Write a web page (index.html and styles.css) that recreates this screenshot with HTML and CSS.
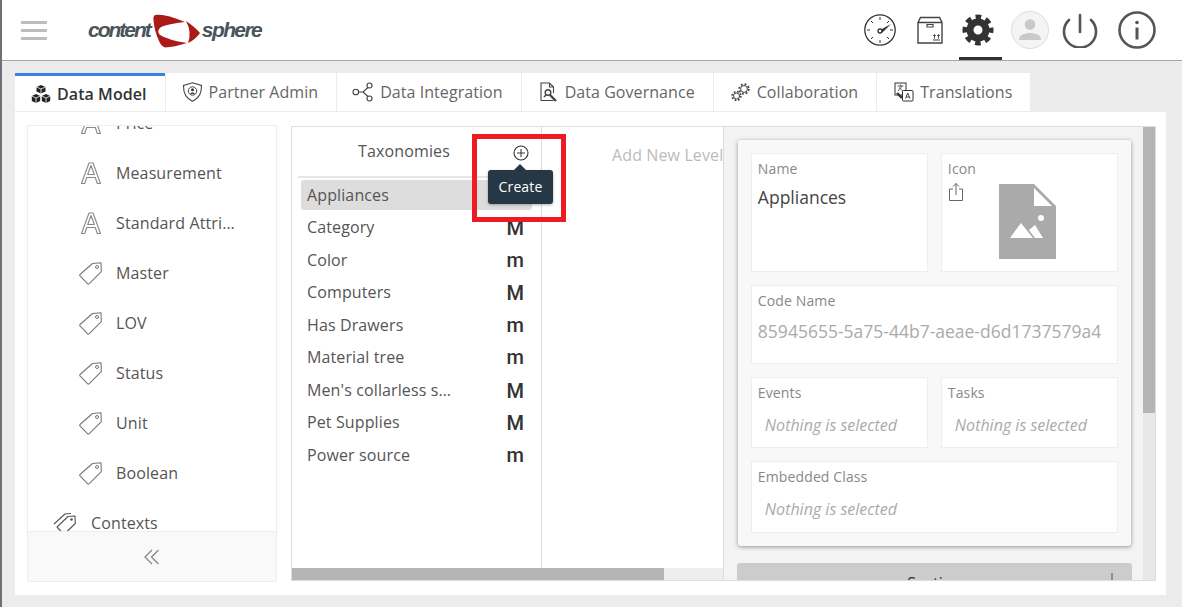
FILE: index.html
```html
<!DOCTYPE html>
<html lang="en">
<head>
    <meta charset="UTF-8">
    <title>Content Sphere - Data Model</title>
    <link rel="stylesheet" href="styles.css">
</head>
<body>
<svg class="defs">
    <defs>
        <symbol id="ic-a" viewBox="0 0 24 24">
            <path d="M2.5 22.5 10 2h4l7.5 20.5h-3.2l-2-6H7.700l-2 6zM8.700 13.500h6.600L12 4.500z" fill="none" stroke="#888" stroke-width="1.100" stroke-linejoin="round"/>
        </symbol>
        <symbol id="ic-tag" viewBox="0 0 24 24">
            <path d="M1 13.500 13.500 2.500l8.500-.8.300 9L10 22.800a1 1 0 0 1-1.300 0L1 14.800a1 1 0 0 1 0-1.300z" fill="none" stroke="#777" stroke-width="1.100" stroke-linejoin="round"/>
            <circle cx="18" cy="6" r="1.500" fill="none" stroke="#777"/>
        </symbol>
    </defs>
</svg>

<header class="topbar">
    <button class="burger"><span></span><span></span><span></span></button>
    <div class="logo">
        <span>content</span>
        <svg width="48" height="35" viewBox="155 13 48 35">
            <path d="M157 15Q166 13 187 22 170 24 163 27 158 31 162 35 170 40 189 43 176 47 167 47.500 163 46 161 41 156 30 155.500 20 155 16 157 15z" fill="#ab1a16"/>
            <path d="M188 21Q197 27 202 33 197 40 190 43 194 32 188 21z" fill="#ab1a16"/>
        </svg>
        <span class="logo-end">sphere</span>
    </div>
    <nav class="top-icons">
        <a class="top-btn">
            <svg width="34" height="34" viewBox="0 0 34 34" fill="none" stroke="#333">
                <circle cx="17" cy="17" r="15.200" stroke-width="1.300"/>
                <path d="M17 4v3M17 27v3M4 17h3M27 17h3M8 8l2 2M26 8l-2 2M8 26l2-2M26 26l-2-2" stroke-width="1"/>
                <circle cx="17" cy="18" r="2" stroke-width="1.300"/>
                <path d="M18 16.500 28 11l-8.500 8.500z" fill="#333" stroke="none"/>
            </svg>
        </a>
        <a class="top-btn">
            <svg width="28" height="28" viewBox="0 0 28 28" fill="none" stroke="#444" stroke-width="1.400">
                <path d="M2 6.500 4.500 1.500h19L26 6.500V27H2zM2 6.500h24"/>
                <path d="M11 8.500h6v2.500h-6z" stroke-width="1.200"/>
                <path d="M17 24h7M18.500 22.500v-4M22.500 22.500v-4M17.300 20l1.200-1.500 1.200 1.500M21.300 20l1.200-1.500 1.200 1.500" stroke-width="1"/>
            </svg>
        </a>
        <a class="top-btn is-current">
            <svg width="34" height="34" viewBox="0 0 34 34" fill="none" stroke="#333">
                <circle cx="17" cy="17" r="13" stroke-width="5" stroke-dasharray="5.600 4.610" stroke-dashoffset="2.800"/>
                <circle cx="17" cy="17" r="8" stroke-width="7"/>
            </svg>
        </a>
        <a class="top-btn">
            <span class="avatar">
                <svg width="24" height="24" viewBox="0 0 24 24" fill="#c9c9c9">
                    <circle cx="12" cy="7.500" r="5.300"/>
                    <path d="M1 23c0-5 5-7 11-7s11 2 11 7z"/>
                </svg>
            </span>
        </a>
        <a class="top-btn">
            <svg width="36" height="36" viewBox="0 0 36 36" fill="none" stroke="#555" stroke-width="2.600" stroke-linecap="round">
                <path d="M7 8a16 16 0 1 0 22 0"/>
                <path d="M18 3v17"/>
            </svg>
        </a>
        <a class="top-btn is-last">
            <svg width="38" height="38" viewBox="0 0 38 38" fill="none" stroke="#555">
                <circle cx="19" cy="19" r="17.500" stroke-width="2.600"/>
                <path d="M19 16.500v12" stroke-width="3"/>
                <circle cx="19" cy="11.500" r="1.800" fill="#555" stroke="none"/>
            </svg>
        </a>
    </nav>
</header>

<div class="tabs">
    <a class="tab is-active">
        <svg width="20" height="20" viewBox="0 0 20 20" fill="#222">
            <path d="M10 1 14.500 3v4.500L10 9.500 5.500 7.500V3z"/>
            <path d="M5 10l4.200 2v5L5 19 .800 17v-5z"/>
            <path d="M15 10l4.200 2v5L15 19l-4.200-2v-5z"/>
            <path d="M5.500 3 10 5l4.500-2M10 5v4.500M.800 12 5 14l4.200-2M5 14v5M10.800 12l4.200 2 4.200-2M15 14v5" fill="none" stroke="#fff" stroke-width=".8"/>
        </svg>
        Data Model
    </a>
    <a class="tab">
        <svg width="20" height="20" viewBox="0 0 20 20" fill="none" stroke="#444">
            <path d="M9.500.800 18.500 3.500c0 7-1.500 12-9 15.800C2 15.500.500 10.500.500 3.500z" stroke-width="1.100"/>
            <circle cx="9.500" cy="9" r="4.200" stroke-width="1"/>
            <circle cx="9.500" cy="7.800" r="1.500" fill="#333" stroke="none"/>
            <path d="M7.300 12c0-2 4.400-2 4.400 0z" fill="#333" stroke="none"/>
        </svg>
        Partner Admin
    </a>
    <a class="tab">
        <svg width="20" height="20" viewBox="0 0 20 20" fill="none" stroke="#444" stroke-width="1.100">
            <circle cx="1.800" cy="10" r="2.800"/>
            <circle cx="15.500" cy="3.500" r="2.500"/>
            <circle cx="15.500" cy="16.500" r="2.500"/>
            <path d="M4.600 10H9l5-4.500M9 10l5 4.500"/>
        </svg>
        Data Integration
    </a>
    <a class="tab">
        <svg width="20" height="20" viewBox="0 0 20 20" fill="none" stroke="#444" stroke-width="1.100">
            <path d="M14.500 18.500H2V1h8.500l4 4v6M10.500 1v4h4"/>
            <circle cx="9" cy="10.500" r="2.800" stroke-width="1.400"/>
            <path d="M11 13l6 6" stroke-width="2.400"/>
            <path d="M5 15l2-2" stroke-width="1.600"/>
        </svg>
        Data Governance
    </a>
    <a class="tab">
        <svg width="20" height="20" viewBox="0 0 20 20" fill="none" stroke="#444">
            <circle cx="13" cy="7" r="4.800" stroke-width="1.800" stroke-dasharray="1.900 1.870"/>
            <circle cx="13" cy="7" r="3.400" stroke-width="1"/>
            <circle cx="5.500" cy="14" r="4.300" stroke-width="1.800" stroke-dasharray="1.700 1.680"/>
            <circle cx="5.500" cy="14" r="3" stroke-width="1"/>
        </svg>
        Collaboration
    </a>
    <a class="tab">
        <svg width="20" height="20" viewBox="0 0 20 20" fill="none" stroke="#333">
            <rect x="1" y="1" width="11" height="12" fill="#fff"/>
            <path d="M3.500 4h6M6.500 2.500V4M4 9l4-5M5 5.500 9 9" stroke-width=".8"/>
            <rect x="8.500" y="8.500" width="10.500" height="10.500" rx="1" fill="#fff"/>
            <path d="M11.500 16.500 13.700 11l2.300 5.500M12.300 15h3" stroke-width=".9"/>
            <path d="M3 11l5 5" stroke-width="2.400"/>
        </svg>
        Translations
    </a>
</div>

<main class="content">
    <aside class="sidebar">
        <ul class="side-list">
            <li class="side-item"><svg class="side-icon"><use href="#ic-a"/></svg>Price</li>
            <li class="side-item"><svg class="side-icon"><use href="#ic-a"/></svg>Measurement</li>
            <li class="side-item"><svg class="side-icon"><use href="#ic-a"/></svg><span class="side-name">Standard Attributes</span></li>
            <li class="side-item"><svg class="side-icon"><use href="#ic-tag"/></svg>Master</li>
            <li class="side-item"><svg class="side-icon"><use href="#ic-tag"/></svg>LOV</li>
            <li class="side-item"><svg class="side-icon"><use href="#ic-tag"/></svg>Status</li>
            <li class="side-item"><svg class="side-icon"><use href="#ic-tag"/></svg>Unit</li>
            <li class="side-item"><svg class="side-icon"><use href="#ic-tag"/></svg>Boolean</li>
            <li class="side-item is-parent">
                <svg class="side-icon" viewBox="0 0 24 24" fill="none" stroke="#555" stroke-width="1.100">
                    <path d="M1 13 12 3l6-.5M4 16 15 5.500l7-.5.300 7.500L11 23.500z" stroke-linejoin="round"/>
                    <circle cx="18.500" cy="8.500" r="1.300" fill="#555" stroke="none"/>
                </svg>
                Contexts
            </li>
        </ul>
        <div class="side-foot">
            <svg width="16" height="16" viewBox="0 0 16 16" fill="none" stroke="#888" stroke-width="1.300">
                <path d="M8 1 1 8l7 7M14.500 1l-7 7 7 7"/>
            </svg>
        </div>
    </aside>

    <section class="workspace">
        <div class="columns">
            <div class="col-tax">
                <div class="tax-head">
                    <span>Taxonomies</span>
                    <svg class="tax-add" width="16" height="16" viewBox="0 0 16 16" fill="none" stroke="#333">
                        <circle cx="8" cy="8" r="7" stroke-width="1.100"/>
                        <path d="M8 4v8M4 8h8" stroke-width="1"/>
                    </svg>
                    <div class="tooltip">Create</div>
                </div>
                <ul class="tax-list">
                    <li class="tax-row is-selected"><span class="tax-name">Appliances</span><b class="tax-kind">M</b></li>
                    <li class="tax-row"><span class="tax-name">Category</span><b class="tax-kind">M</b></li>
                    <li class="tax-row"><span class="tax-name">Color</span><b class="tax-kind is-lower">m</b></li>
                    <li class="tax-row"><span class="tax-name">Computers</span><b class="tax-kind">M</b></li>
                    <li class="tax-row"><span class="tax-name">Has Drawers</span><b class="tax-kind is-lower">m</b></li>
                    <li class="tax-row"><span class="tax-name">Material tree</span><b class="tax-kind is-lower">m</b></li>
                    <li class="tax-row"><span class="tax-name">Men's collarless shirts</span><b class="tax-kind">M</b></li>
                    <li class="tax-row"><span class="tax-name">Pet Supplies</span><b class="tax-kind">M</b></li>
                    <li class="tax-row"><span class="tax-name">Power source</span><b class="tax-kind is-lower">m</b></li>
                </ul>
            </div>
            <div class="col-levels">Add New Level</div>
            <div class="hscroll"><div class="hscroll-thumb"></div></div>
        </div>

        <div class="details">
            <div class="card">
                <div class="field"><label>Name</label><div class="field-value">Appliances</div></div>
                <div class="field">
                    <label>Icon</label>
                    <div class="icon-row">
                        <svg class="upload" width="16" height="20" viewBox="0 0 16 20" fill="none" stroke="#666">
                            <path d="M5 7H1.500v11.500h13V7H11M8 13V1.500M5 4.500l3-3 3 3"/>
                        </svg>
                        <svg class="placeholder" width="57" height="75" viewBox="0 0 57 75">
                            <path d="M0 0h35l22 22v53H0z" fill="#aaa"/>
                            <path d="M35 4v18h18z" fill="#fff"/>
                            <circle cx="42" cy="34" r="3" fill="#fff"/>
                            <path d="M11 54l11-15 12 15zM30 46l6-5 8 13h-8z" fill="#fff"/>
                        </svg>
                    </div>
                </div>
                <div class="field is-wide"><label>Code Name</label><div class="field-value is-muted">85945655-5a75-44b7-aeae-d6d1737579a4</div></div>
                <div class="field"><label>Events</label><div class="field-empty">Nothing is selected</div></div>
                <div class="field"><label>Tasks</label><div class="field-empty">Nothing is selected</div></div>
                <div class="field is-wide"><label>Embedded Class</label><div class="field-empty">Nothing is selected</div></div>
            </div>
            <div class="section-bar">
                <span>Section</span>
                <svg class="section-plus" width="16" height="16" viewBox="0 0 16 16"><path d="M8 0v16M0 8h16" stroke="#777" stroke-width="1.500"/></svg>
            </div>
        </div>
        <div class="vscroll"><div class="vscroll-thumb"></div></div>
    </section>
</main>

<div class="callout"></div>
</body>
</html>
```

FILE: styles.css
```css
* {
    box-sizing: border-box;
}

html, body {
    height: 607px;
    overflow: hidden;
}

body {
    margin: 0;
    background-color: #ececec;
    border-left: 2px solid #6d7175;
    font-family: "Open Sans", sans-serif;
    font-size: 16px;
    letter-spacing: .12px;
    color: #444;
}

ul {
    list-style: none;
    margin: 0;
    padding: 0;
}

.defs {
    display: none;
}

/* top bar */
.topbar {
    display: flex;
    align-items: stretch;
    height: 61px;
    margin-left: -2px;
    padding-left: 2px;
    background-color: #fff;
    border-bottom: 1px solid #a5a5a5;
}

.burger {
    display: flex;
    flex-direction: column;
    justify-content: center;
    gap: 5px;
    width: 26px;
    margin-left: 19px;
    padding: 0;
    background: none;
    border: none;
}

.burger span {
    display: block;
    height: 3px;
    background-color: #bdbdbd;
}

.logo {
    display: flex;
    align-items: center;
    margin-left: 41px;
    font-family: "Liberation Sans", sans-serif;
    font-size: 21px;
    font-weight: bold;
    font-style: italic;
    letter-spacing: -2px;
    color: #4a5459;
}

.logo svg {
    margin-left: 3px;
}

.logo-end {
    margin-left: 1px;
    letter-spacing: -1.600px;
}

.top-icons {
    display: flex;
    margin-left: auto;
    padding-right: 20px;
}

.top-btn {
    display: flex;
    align-items: center;
    justify-content: center;
    width: 50px;
}

.top-btn.is-current {
    width: 43px;
    margin: 0 3.500px;
    padding: 3px 4px 0 0;
    border-bottom: 3px solid #333;
}

.top-btn.is-last {
    margin-left: 7px;
}

.avatar {
    display: flex;
    align-items: flex-end;
    justify-content: center;
    width: 38px;
    height: 38px;
    padding-bottom: 7px;
    background-color: #f4f4f4;
    border: 1px solid #ddd;
    border-radius: 50%;
}

/* tabs */
.tabs {
    display: flex;
    gap: 1px;
    margin: 12px 0 1px 13px;
}

.tab {
    display: flex;
    align-items: center;
    gap: 6px;
    height: 38px;
    padding: 0 18px 0 17px;
    background-color: #fff;
    color: #666;
    letter-spacing: .06px;
}

.tab svg {
    overflow: visible;
}

.tab.is-active {
    padding: 0 18px 0 16px;
    border-top: 3px solid #3f7fe0;
    color: #333;
    font-weight: 600;
}

/* main area */
.content {
    display: flex;
    gap: 14px;
    width: 1151px;
    height: 483px;
    margin-left: 13px;
    padding: 13px 10px 13px 12px;
    background-color: #fff;
}

.sidebar {
    display: flex;
    flex-direction: column;
    flex: 0 0 250px;
    overflow: hidden;
    border: 1px solid #eee;
}

.side-list {
    flex: 1;
    min-height: 0;
    margin-top: -28px;
}

.side-item {
    display: flex;
    align-items: center;
    gap: 13px;
    height: 50px;
    padding-left: 51px;
    color: #555;
}

.side-item.is-parent {
    gap: 14px;
    padding-left: 25px;
}

.side-icon {
    flex: none;
    width: 24px;
    height: 24px;
}

.side-name {
    width: 119px;
    overflow: hidden;
    white-space: nowrap;
    text-overflow: ellipsis;
}

.side-foot {
    display: flex;
    flex: none;
    align-items: center;
    justify-content: center;
    height: 50px;
    background-color: #f9f9f9;
    border-top: 1px solid #eee;
}

.workspace {
    display: flex;
    flex: none;
    width: 865px;
    height: 455px;
    margin-top: 1px;
    background-color: #f3f3f3;
    border: 1px solid #ddd;
}

.columns {
    position: relative;
    display: flex;
    flex: 0 0 431px;
    padding-bottom: 12px;
    background-color: #fff;
    border-right: 1px solid #ddd;
}

.col-tax {
    position: relative;
    flex: 0 0 250px;
    border-right: 1px solid #ddd;
}

.tax-head {
    display: flex;
    align-items: center;
    justify-content: center;
    height: 51px;
    margin: 0 10px 0 6px;
    padding: 0 21px 2px 0;
    border-bottom: 2px solid #e6e6e6;
    color: #555;
}

.tax-add {
    position: absolute;
    top: 17.500px;
    left: 221px;
}

.tooltip {
    position: absolute;
    z-index: 2;
    top: 43px;
    left: 196px;
    width: 65px;
    height: 34px;
    background-color: #263746;
    border-radius: 3px;
    box-shadow: 0 1px 3px rgba(0, 0, 0, 0.3);
    color: #fff;
    font-size: 14px;
    line-height: 34px;
    text-align: center;
}

.tooltip::before {
    content: "";
    position: absolute;
    top: -6px;
    left: 26px;
    border-right: 6px solid transparent;
    border-bottom: 6px solid #263746;
    border-left: 6px solid transparent;
}

.tax-list {
    margin-top: 2px;
    padding: 0 9px;
}

.tax-row {
    display: flex;
    align-items: center;
    justify-content: space-between;
    height: 32.500px;
    padding: 0 8px 0 6px;
    border-radius: 3px;
    color: #555;
}

.tax-row.is-selected {
    height: 30px;
    margin-bottom: 1px;
    background-color: #ddd;
}

.tax-name {
    width: 146px;
    overflow: hidden;
    white-space: nowrap;
    text-overflow: ellipsis;
}

.tax-kind {
    margin-top: 2px;
    color: #333;
    font-family: Roboto, sans-serif;
    font-size: 20px;
    font-weight: 500;
}

.tax-kind.is-lower {
    margin-top: 0;
}

.col-levels {
    flex: 1;
    min-width: 0;
    padding: 17px 0 0 70px;
    overflow: hidden;
    color: #bbb;
    white-space: nowrap;
}

.hscroll {
    position: absolute;
    right: 0;
    bottom: 0;
    left: 0;
    height: 12px;
    background-color: #eee;
}

.hscroll-thumb {
    width: 372px;
    height: 12px;
    background-color: #b5b5b5;
}

.details {
    flex: 1;
    min-width: 0;
    overflow: hidden;
    padding: 13px 12px 0 13px;
}

.card {
    display: grid;
    grid-template-columns: 177px 177px;
    grid-template-rows: 119px 79px 71px 72px;
    gap: 13px;
    width: 393px;
    height: 406px;
    margin-left: 1px;
    padding: 13px;
    background-color: #f8f8f8;
    border-radius: 3px;
    box-shadow: 0 1px 4px rgba(0, 0, 0, 0.4);
}

.field {
    padding: 4.500px 5.500px;
    background-color: #fff;
    border: 1px solid #eee;
}

.field.is-wide {
    grid-column: span 2;
}

.field label {
    display: block;
    color: #888;
    font-size: 14px;
}

.field-value {
    margin-top: 7.500px;
    color: #444;
    font-size: 17.500px;
    letter-spacing: 0;
}

.field-value.is-muted {
    margin-top: 9.500px;
    color: #aaa;
}

.field-empty {
    margin-top: 12px;
    padding-left: 7px;
    color: #aaa;
    font-style: italic;
    letter-spacing: 0;
}

.icon-row {
    display: flex;
    align-items: flex-start;
    margin-top: 1px;
}

.upload {
    margin-top: 3px;
}

.placeholder {
    margin: 5px 0 0 35.500px;
}

.section-bar {
    position: relative;
    display: flex;
    align-items: center;
    justify-content: center;
    width: 395px;
    height: 40px;
    margin-top: 17px;
    background-color: #ccc;
    border-radius: 3px;
    color: #333;
}

.section-plus {
    position: absolute;
    top: 10px;
    right: 12px;
}

.vscroll {
    flex: 0 0 12px;
    background-color: #e8e8e8;
}

.vscroll-thumb {
    height: 286px;
    background-color: #b5b5b5;
}

/* red annotation box drawn over the screenshot */
.callout {
    position: absolute;
    top: 134px;
    left: 472px;
    width: 94px;
    height: 88px;
    border: 5px solid #ed1c24;
    pointer-events: none;
}
```
